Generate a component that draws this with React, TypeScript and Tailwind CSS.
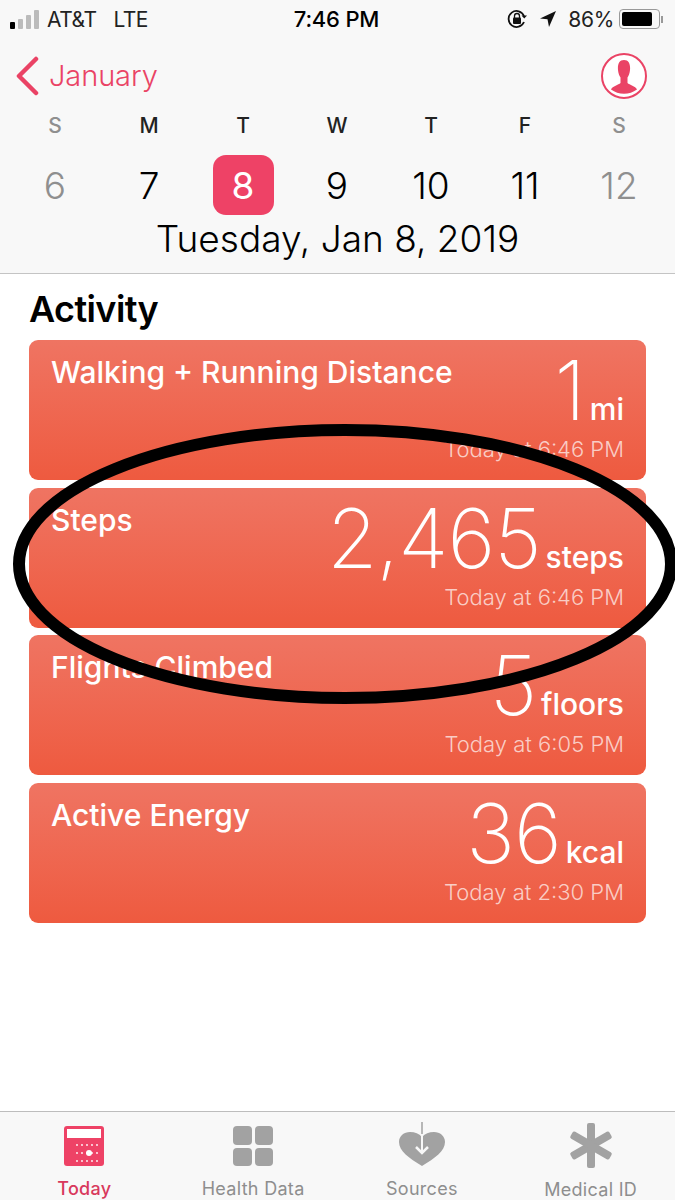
import React from 'react';

const DAYS = [
  { l: 'S', n: '6', muted: true },
  { l: 'M', n: '7' },
  { l: 'T', n: '8', active: true },
  { l: 'W', n: '9' },
  { l: 'T', n: '10' },
  { l: 'F', n: '11' },
  { l: 'S', n: '12', muted: true },
];

const CARDS = [
  { title: 'Walking + Running Distance', value: '1', unit: 'mi', time: 'Today at 6:46 PM' },
  { title: 'Steps', value: '2,465', unit: 'steps', time: 'Today at 6:46 PM' },
  { title: 'Flights Climbed', value: '5', unit: 'floors', time: 'Today at 6:05 PM' },
  { title: 'Active Energy', value: '36', unit: 'kcal', time: 'Today at 2:30 PM' },
];

const Dots = () => (
  <svg width="40" height="40" viewBox="0 0 40 40">
    <rect x="0" y="0" width="40" height="40" rx="3" fill="#ee4266" />
    <rect x="3" y="3" width="34" height="9" fill="#fff" />
    {[20, 28, 36].map((y) =>
      [13, 18, 23, 28, 33].map((x) => <circle key={`${x}-${y}`} cx={x} cy={y - 1} r="0.9" fill="#fff" />),
    )}
    <circle cx="25" cy="27" r="3" fill="#fff" />
  </svg>
);

const StatusBar = () => (
  <div className="h-[34px] flex items-center justify-between pl-[10px] pr-[12px] pt-[4px] text-[#222] text-[21px] leading-none">
    <div className="flex items-center w-[220px]">
      <div className="flex items-end gap-[3px] h-[19px] mr-[8px]">
        <span className="w-[5px] h-[7px] bg-black rounded-[1px]" />
        <span className="w-[5px] h-[10px] bg-[#bbb] rounded-[1px]" />
        <span className="w-[5px] h-[14px] bg-[#bbb] rounded-[1px]" />
        <span className="w-[5px] h-[19px] bg-[#bbb] rounded-[1px]" />
      </div>
      <span className="tracking-[-0.5px]">AT&amp;T</span>
      <span className="ml-[17px] tracking-[-0.5px]">LTE</span>
    </div>
    <span className="font-medium text-[22px] text-black tracking-[-0.2px]">7:46 PM</span>
    <div className="flex items-center justify-end w-[220px]">
      <svg width="22" height="22" viewBox="0 0 22 22" fill="none" className="mr-[11px]">
        <path d="M18 14a8 8 0 1 1 0-6" stroke="#111" strokeWidth="1.8" />
        <path d="M15.5 7.5h5.5l-2.700 3z" fill="#111" />
        <rect x="7" y="9.500" width="8" height="6.500" rx="1" fill="#111" />
        <path d="M8.500 10V8a2.500 2.500 0 0 1 5 0v2" stroke="#111" strokeWidth="1.300" />
      </svg>
      <svg width="18" height="18" viewBox="0 0 18 18" className="mr-[11px]">
        <path d="M17 1 1 8.500l7.500.8L10 17z" fill="#111" />
      </svg>
      <span className="mr-[5px] tracking-[-0.3px]">86%</span>
      <div className="w-[41px] h-[20px] border border-[#999] rounded-[4px] p-[2px]">
        <div className="w-[85%] h-full bg-black rounded-[2px]" />
      </div>
      <span className="w-[2px] h-[7px] bg-[#999] ml-[1px]" />
    </div>
  </div>
);

const TabLabel = ({ children, active }: { children: React.ReactNode; active?: boolean }) => (
  <span className={`text-[18px] leading-none tracking-[0.3px] whitespace-nowrap ${active ? 'text-[#d8395c] font-medium' : 'text-[#8e8e8e]'}`}>{children}</span>
);

export default function App() {
  return (
    <div className="relative w-[675px] h-[1200px] bg-white overflow-hidden flex flex-col font-['Inter','Liberation_Sans',sans-serif]">
      <div className="h-[274px] bg-[#f8f8f8] border-b border-[#c4c4c4] flex flex-col shrink-0">
        <StatusBar />

        <div className="h-[70px] pt-[13px] flex items-center justify-between pl-[16px] pr-[28px]">
          <div className="flex items-center text-[#ea4365]">
            <svg width="23" height="40" viewBox="0 0 23 40" fill="none">
              <path d="M20 3 3 20l17 17" stroke="#ea4365" strokeWidth="4.500" strokeLinecap="round" strokeLinejoin="round" />
            </svg>
            <span className="text-[29px] ml-[10px] font-light tracking-[-0.1px]">January</span>
          </div>
          <svg width="46" height="46" viewBox="0 0 46 46">
            <circle cx="23" cy="23" r="22" fill="#fff" stroke="#ea4365" strokeWidth="2" />
            <path d="M23 7c-5 0-6.500 4.500-6 10 .3 3 1.200 5.500 2.500 7.500v5.500c-2 2-8 3-9.500 6.500a22 22 0 0 0 26 0c-1.500-3.500-7.500-4.500-9.500-6.500v-5.500c1.300-2 2.200-4.500 2.500-7.500C29.500 11.500 28 7 23 7z" fill="#ea4365" />
          </svg>
        </div>

        <div className="grid grid-cols-7 pl-[8px] pr-[9px] mt-[9px]">
          {DAYS.map((d, i) => (
            <div key={i} className="flex flex-col items-center">
              <span className={`text-[21px] leading-[26px] font-medium ${d.muted ? 'text-[#8f8f8f]' : 'text-[#222]'}`}>{d.l}</span>
              <div className={`mt-[16px] w-[61px] h-[60px] rounded-[13px] flex items-center justify-center text-[37px] leading-none font-light ${d.active ? 'bg-[#ee4266] text-white font-normal' : d.muted ? 'text-[#8f8f8f]' : 'text-black'}`}>
                {d.n}
              </div>
            </div>
          ))}
        </div>

        <div className="text-center text-[37px] leading-[46px] font-light text-black mt-[1px] whitespace-nowrap">Tuesday, Jan 8, 2019</div>
      </div>

      <div className="px-[29px] flex-1 flex flex-col">
        <h1 className="text-[36px] leading-[40px] mt-[15px] mb-[11px] font-semibold text-black tracking-[-0.6px]">Activity</h1>
        <div className="flex flex-col gap-[7.500px]">
          {CARDS.map((c) => (
            <div key={c.title} className="h-[140px] rounded-[9px] bg-gradient-to-b from-[#ef7462] to-[#ee5a3f] flex justify-between pl-[22px] pr-[22px] text-white">
              <span className="min-w-0 text-[30px] leading-[34px] mt-[15px] font-medium whitespace-nowrap">{c.title}</span>
              <div className="flex flex-col items-end shrink-0">
                <div className="flex items-baseline h-[95px] pt-[10px]">
                  <span className="text-[82px] leading-[82px] font-extralight tracking-[-1px]">{c.value}</span>
                  <span className="text-[30px] leading-none font-medium ml-[5px]">{c.unit}</span>
                </div>
                <span className="text-[22px] leading-[28px] text-white/70 font-light whitespace-nowrap">{c.time}</span>
              </div>
            </div>
          ))}
        </div>
      </div>

      <div className="h-[89px] bg-[#f8f8f8] border-t border-[#bdbdbd] grid grid-cols-4 shrink-0">
        <div className="flex flex-col items-center pt-[14px] gap-[14px]">
          <Dots />
          <TabLabel active>Today</TabLabel>
        </div>
        <div className="flex flex-col items-center pt-[14px] gap-[14px]">
          <div className="w-[40px] h-[40px] grid grid-cols-2 gap-[3px]">
            <span className="bg-[#a2a2a2] rounded-[4px]" />
            <span className="bg-[#a2a2a2] rounded-[4px]" />
            <span className="bg-[#a2a2a2] rounded-[4px]" />
            <span className="bg-[#a2a2a2] rounded-[4px]" />
          </div>
          <TabLabel>Health Data</TabLabel>
        </div>
        <div className="flex flex-col items-center pt-[10px] gap-[14px]">
          <svg width="46" height="44" viewBox="0 0 46 44">
            <path d="M23 44C10 36 0 29 0 20 0 14 5 10 11 10c5 0 9 1.500 12 5 3-3.500 7-5 12-5 6 0 11 4 11 10 0 9-10 16-23 24z" fill="#a2a2a2" />
            <path d="M23 9v22" stroke="#f8f8f8" strokeWidth="2" />
            <path d="M23 0v12" stroke="#a2a2a2" strokeWidth="1.500" />
            <path d="M17 25l6 6 6-6" fill="none" stroke="#f8f8f8" strokeWidth="2.500" />
          </svg>
          <TabLabel>Sources</TabLabel>
        </div>
        <div className="flex flex-col items-center pt-[11px] gap-[13px]">
          <svg width="44" height="45" viewBox="0 0 44 45" fill="#a2a2a2">
            <rect x="18" y="0" width="8" height="45" rx="2" />
            <rect x="18" y="0" width="8" height="45" rx="2" transform="rotate(60 22 22.500)" />
            <rect x="18" y="0" width="8" height="45" rx="2" transform="rotate(-60 22 22.500)" />
          </svg>
          <TabLabel>Medical ID</TabLabel>
        </div>
      </div>

      {/* marker circle drawn over the screenshot */}
      <svg className="absolute left-0 top-0 pointer-events-none" width="675" height="1200" viewBox="0 0 675 1200" fill="none">
        <ellipse cx="345" cy="564" rx="326" ry="134" stroke="#000" strokeWidth="12" />
      </svg>
    </div>
  );
}
